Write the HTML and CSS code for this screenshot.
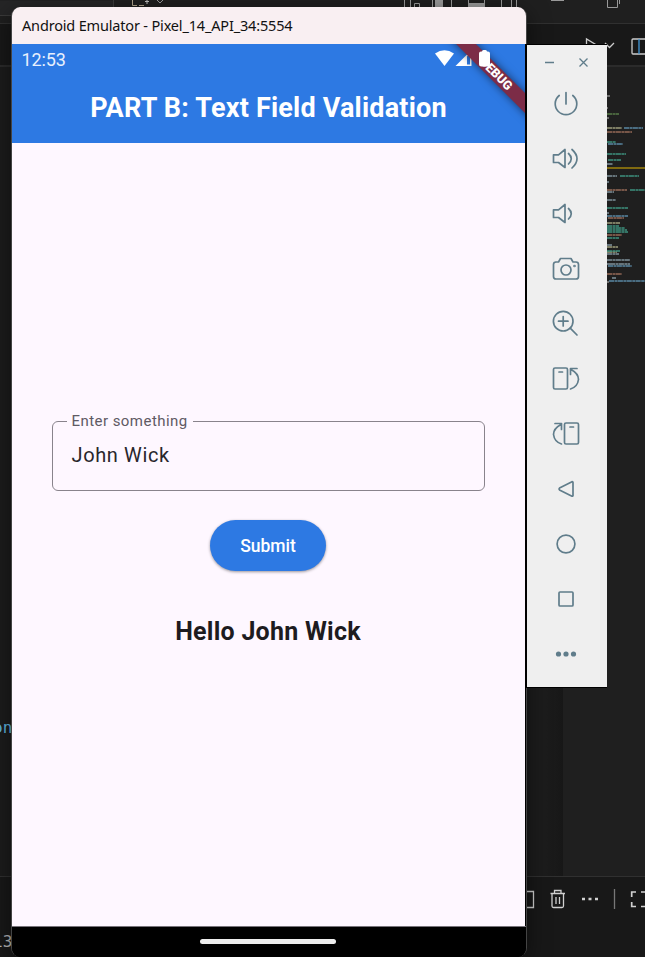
FILE: index.html
```html
<!DOCTYPE html>
<html lang="en">
<head>
<meta charset="utf-8">
<title>Android Emulator</title>
<link rel="stylesheet" href="styles.css">
</head>
<body>
<div class="desktop">
  <div class="editor">
    <div class="editor-title">
      <svg width="645" height="23" viewBox="0 0 645 23" fill="none" stroke="#999">
        <path d="M0 .5H113V15.5H0" fill="#252526" stroke="none"/><path d="M0 15.5H113.5V0" stroke="#3a3a3a"/>
        <path d="M132.500 0V5.500H137M139 5.500H144" stroke="#b0a48d"/><path d="M147 0V4M145 1.500H149" stroke="#bbb"/><path d="M157 0L160 3L163 0"/>
        <path d="M404.500 0V9M410.500 0V9M414.500 9V3.500H419.500V9M432.500 0V9M451.500 0V9M468.500 0V9M484.500 0V9M501.500 0V9M511.500 0V9M516.500 0V9"/>
        <path d="M435 0H443V9H435ZM468 3H485V7H468Z" fill="#999" stroke="none"/>
        <path d="M551 .5H564M607.500 0V7.500H617.500V0M619.500 0V4"/>
      </svg>
    </div>
    <div class="editor-tabs">
      <svg width="65" height="43" viewBox="580 24 65 43" fill="none" stroke="#ccc" stroke-width="1.300">
        <path d="M586.500 50V39L599 46.500"/><path d="M605 43L609.500 47.500L614 43"/>
        <rect x="632" y="39" width="20" height="15" rx="1"/><path d="M639 39V54" stroke="#4298d8"/>
      </svg>
    </div>
    <div class="editor-body">
      <div class="side"><span class="side-code">on</span></div>
      <div class="pane">
        <svg width="38" height="220" viewBox="607 67 38 220" fill="none" stroke-width="1.500">
          <path d="M607 168H645" stroke="#806a10" stroke-width="2"/>
          <g stroke-dasharray="5 .5 3 .4" opacity=".75">
          <path d="M607 96H610M607 108H608M607 118H609M607 282H609" stroke="#aaa"/>
          <path d="M607 114H619" stroke="#6a9955"/>
          <path d="M607 128H622M607 223H620M607 247H618M607 252H617" stroke="#c8c89a"/>
          <path d="M624 128H643M608 144H623M607 216H628M608 266H632M609 281H645" stroke="#6eabd0"/>
          <path d="M607 132H632M607 190H627M608 218H624M607 235H622M607 274H622" stroke="#bd826a"/>
          <path d="M607 142H616M607 154H626M608 160H621M620 176H639M607 208H628M607 226H619M607 228H625M607 230H627M607 232H628M607 238H619M607 251H620M630 190H645" stroke="#48b89e"/>
          <path d="M607 164H613M607 176H617M607 182H609M607 192H614M607 200H616M607 213H609M607 245H612M607 254H619M607 260H630M607 264H614M610 264H630M612 278H616" stroke="#9eb8c4"/>
          </g>
        </svg>
      </div>
    </div>
    <div class="terminal">
      <span class="terminal-code">13</span>
      <svg width="125" height="40" viewBox="520 879 125 40" fill="none" stroke="#d0d0d0" stroke-width="1.300">
        <path d="M526 891.500H533.500V907.500H526"/>
        <path d="M550.500 893.500H565M554.500 893V890.500H561V893M552 894V906Q552 907.500 553.500 907.500H562Q563.500 907.500 563.500 906V894M556 897V904M559.500 897V904"/>
        <path d="M582 899H585M588.500 899H591.500M595 899H598" stroke-width="2.500"/>
        <path d="M614.500 889V909" stroke="#777"/>
        <path d="M636 892H631.700V897M631.700 902V906.500H636M641 892H645M641 906.500H645" stroke-width="1.700"/>
      </svg>
    </div>
  </div>

  <main class="emulator">
    <header class="window-title"><span>Android Emulator - Pixel_14_API_34:5554</span></header>
    <section class="app-bar">
      <div class="status">
        <span class="clock">12:53</span>
        <svg class="status-icons" width="58" height="18" viewBox="434 50 58 18" fill="#fff">
          <path d="M435 53.500Q444.500 47 454 53.500L444.500 66Z"/>
          <path fill-rule="evenodd" d="M455.500 66L471.500 50V66ZM467 56.500V64.500H470V53.500Z"/>
        </svg>
      </div>
      <h1 class="app-title"><span>PART B: Text Field Validation</span></h1>
      <div class="banner">DEBUG</div>
      <svg class="battery" width="12" height="18" viewBox="0 0 12 18" fill="#fff"><path d="M3 1.500Q3 0 4.500 0H6.500Q8 0 8 1.500H9Q11 1.500 11 3.500V14Q11 16.500 8.500 16.500H2.500Q0 16.500 0 14V3.500Q0 1.500 2 1.500Z"/></svg>
    </section>
    <section class="screen">
      <div class="field">
        <span class="field-label">Enter something</span>
        <span class="field-value">John Wick</span>
      </div>
      <button class="submit">Submit</button>
      <p class="greeting">Hello John Wick</p>
    </section>
    <footer class="nav"><div class="handle"></div></footer>
  </main>

  <aside class="toolbar">
    <div class="window-buttons">
      <svg width="80" height="31" viewBox="0 0 80 31" fill="none" stroke="#607d8b" stroke-width="1.300"><path d="M18 17.500H27M52.500 13.500L60.500 21.500M60.500 13.500L52.500 21.500"/></svg>
    </div>
    <svg class="tool" viewBox="0 0 40 40"><path d="M13.200 11.500A10.800 10.800 0 1 0 26.800 11.500M20 8.500V20"/></svg>
    <svg class="tool" viewBox="0 0 40 40"><path d="M7.500 15.800H12.500L19 10.500V28.500L12.500 23.500H7.500ZM22.500 14.500Q28 19.500 22.500 25M26 10.500Q36 19.500 26 29"/></svg>
    <svg class="tool" viewBox="0 0 40 40"><path d="M7.500 15.800H12.500L19 10.500V28.500L12.500 23.500H7.500ZM22.500 14.500Q28 19.500 22.500 25"/></svg>
    <svg class="tool" viewBox="0 0 40 40"><path d="M9.500 13H12.500L14.500 9.500H25L27 13H30Q32.500 13 32.500 15.500V27.500Q32.500 30 30 30H10Q7.500 30 7.500 27.500V15.500Q7.500 13 10 13Z"/><circle cx="20" cy="21" r="5"/><circle cx="28.500" cy="17" r=".5"/></svg>
    <svg class="tool" viewBox="0 0 40 40"><circle cx="17.200" cy="17.200" r="9.800"/><path d="M24.200 24.200L31 31M17.200 12.500V22M12.500 17.200H22"/></svg>
    <svg class="tool" viewBox="0 0 40 40"><rect x="7.500" y="9" width="14" height="21" rx="1.500"/><path d="M13 13H16.500M24.500 15.500V9.500H31M25 10.500Q32.500 14.500 32.500 20.500Q31.500 28 24.500 30"/></svg>
    <svg class="tool" viewBox="0 0 40 40"><rect x="18.500" y="9" width="14" height="21" rx="1.500"/><path d="M24 13H27.500M15.500 15.500V9.500H9M15 10.500Q7.500 14.500 7.500 20.500Q8.500 28 15.500 30"/></svg>
    <svg class="tool" viewBox="0 0 40 40"><path d="M13.500 19L26 12.700Q27 12.500 27 13.500V26.500Q27 27.500 26 27.200L13.500 21Q12.500 20 13.500 19Z"/></svg>
    <svg class="tool" viewBox="0 0 40 40"><circle cx="20" cy="20" r="8.900"/></svg>
    <svg class="tool" viewBox="0 0 40 40"><rect x="13" y="13" width="14" height="14" rx="1"/></svg>
    <svg class="tool dots" viewBox="0 0 40 40"><circle cx="12.500" cy="20" r="2.600"/><circle cx="20" cy="20" r="2.600"/><circle cx="27.500" cy="20" r="2.600"/></svg>
  </aside>
</div>
</body>
</html>
```
FILE: styles.css
```css
* { box-sizing: border-box; }
body { margin: 0; background: #1f1f1f; font-family: Roboto, "Liberation Sans", sans-serif; }
svg { display: block; }
.desktop { position: relative; width: 645px; height: 957px; overflow: hidden; }

.editor { display: flex; flex-direction: column; height: 957px; }
.editor-title { height: 24px; background: #1f1f1f; border-bottom: 1px solid #303030; }
.editor-tabs { height: 43px; background: #181818; border-bottom: 2px solid #2b2b2b; display: flex; justify-content: flex-end; }
.editor-body { flex: 1; display: flex; }
.side { width: 563px; background: linear-gradient(90deg, #1c1c1c 97%, #171717); padding-top: 651px; }
.side-code { font: 16px/20px "DejaVu Sans Mono", monospace; color: #60b5e0; margin-left: -7px; }
.pane { flex: 1; display: flex; justify-content: flex-end; background: #1f1f1f; }
.terminal { height: 81px; background: #181818; border-top: 1px solid #303030; display: flex; justify-content: space-between; padding-top: 2px; }
.terminal-code { font: 16px/20px "DejaVu Sans Mono", monospace; color: #bbb; margin: 53px 0 0 -7px; }

.emulator {
  position: absolute; left: 11px; top: 7px; width: 516px; height: 950px;
  display: flex; flex-direction: column;
  border: solid #444; border-width: 0 1px; border-radius: 9px;
  background: #000; overflow: hidden; box-shadow: 0 6px 22px rgba(0, 0, 0, .5);
}
.window-title { height: 37px; padding-left: 10px; background: #f9eff2; color: #111; font: 14.5px/36px "Noto Sans", sans-serif; letter-spacing: -.17px; white-space: nowrap; }
.app-bar { position: relative; width: 513px; height: 99px; background: #2d79e3; color: #fff; overflow: hidden; }
.status { display: flex; justify-content: space-between; padding: 6px 33px 0 9.5px; height: 44px; }
.clock { font-size: 18px; line-height: 19px; letter-spacing: -.1px; color: #e8f0fd; }
.app-title { margin: 0; text-align: center; font-size: 27px; line-height: 40px; font-weight: 700; letter-spacing: .2px; white-space: nowrap; }
.banner {
  position: absolute; left: 404px; top: 23px; width: 160px; height: 14px;
  transform: rotate(45deg); background: #7c2c47; box-shadow: 0 0 8px rgba(0, 0, 0, .55);
  text-align: center; font-size: 12.500px; line-height: 14.500px; font-weight: 900;
}
.battery { position: absolute; left: 467px; top: 6px; }

.screen { width: 513px; height: 783px; background: #fef7ff; display: flex; flex-direction: column; align-items: center; padding: 278px 1px 0 0; }
.field { position: relative; width: 433px; height: 70px; border: 1px solid #89838c; border-radius: 6px; padding: 20px 19px; }
.field-label { position: absolute; left: 14px; top: -11px; padding: 0 5px; background: #fef7ff; color: #605a64; font-size: 15px; line-height: 20px; letter-spacing: .45px; white-space: nowrap; }
.field-value { font-size: 20px; line-height: 26px; letter-spacing: .62px; color: #29262c; display: block; }
.submit { margin-top: 29px; width: 116px; height: 51px; padding: 1px 0 0; border: 0; border-radius: 26px; background: #2d79e3; color: #fff; font: 500 17.500px/50px Roboto, sans-serif; box-shadow: 0 1px 3px rgba(0, 0, 0, .4); }
.greeting { margin: 43px 0 0; font-size: 25px; line-height: 35px; font-weight: 700; letter-spacing: .25px; color: #1d1b20; }
.nav { height: 31px; background: #000; border-top: 1px solid #77737a; }
.handle { width: 136px; height: 5px; margin: 12px 0 0 188px; border-radius: 3px; background: #ededed; }

.toolbar { position: absolute; left: 525px; top: 44px; width: 82px; height: 644px; border: solid #000; border-width: 1px 0 1px 2px; background: #efefef; display: flex; flex-direction: column; align-items: center; }
.window-buttons { height: 39px; flex: none; }
.tool { width: 40px; height: 40px; margin: 0 0 15px -2px; flex: none; fill: none; stroke: #607d8b; stroke-width: 1.700; stroke-linecap: round; stroke-linejoin: round; }
.tool:last-child { margin-bottom: 0; }
.dots { fill: #607d8b; stroke: none; }
```
